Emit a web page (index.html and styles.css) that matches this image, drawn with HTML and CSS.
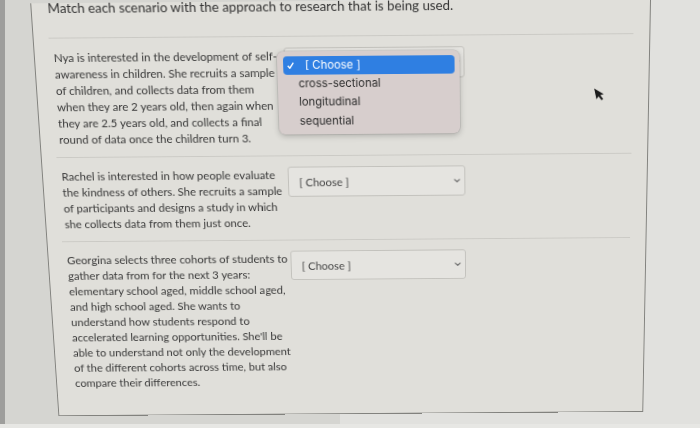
FILE: index.html
```html
<!DOCTYPE html>
<html lang="en">
<head>
<meta charset="utf-8">
<title>Matching question</title>
<link rel="stylesheet" href="styles.css">
</head>
<body>
<div class="screen">
  <section class="panel">
    <p class="title">Match each scenario with the approach to research that is being used.</p>
    <div class="rows">
      <div class="row">
        <p class="prompt">Nya is interested in the development of self-<br>awareness in children. She recruits a sample<br>of children, and collects data from them<br>when they are 2 years old, then again when<br>they are 2.5 years old, and collects a final<br>round of data once the children turn 3.</p>
        <div class="select is-open">
          <svg class="chevron" viewBox="0 0 7 4"><polyline points="0.6,0.6 3.5,3.3 6.4,0.6"/></svg>
          <ul class="menu">
            <li class="option is-selected"><svg class="check" viewBox="0 0 7 7"><polyline points="0.7,3.8 2.7,6.2 6.3,0.7"/></svg>[ Choose ]</li>
            <li class="option">cross-sectional</li>
            <li class="option">longitudinal</li>
            <li class="option">sequential</li>
          </ul>
        </div>
      </div>
      <div class="row">
        <p class="prompt">Rachel is interested in how people evaluate<br>the kindness of others. She recruits a sample<br>of participants and designs a study in which<br>she collects data from them just once.</p>
        <div class="select">
          <span class="select-value">[ Choose ]</span>
          <svg class="chevron" viewBox="0 0 7 4"><polyline points="0.6,0.6 3.5,3.3 6.4,0.6"/></svg>
        </div>
      </div>
      <div class="row">
        <p class="prompt">Georgina selects three cohorts of students to<br>gather data from for the next 3 years:<br>elementary school aged, middle school aged,<br>and high school aged. She wants to<br>understand how students respond to<br>accelerated learning opportunities. She'll be<br>able to understand not only the development<br>of the different cohorts across time, but also<br>compare their differences.</p>
        <div class="select">
          <span class="select-value">[ Choose ]</span>
          <svg class="chevron" viewBox="0 0 7 4"><polyline points="0.6,0.6 3.5,3.3 6.4,0.6"/></svg>
        </div>
      </div>
    </div>
  </section>
  <svg class="cursor" viewBox="0 0 10 15"><path d="M0.5 0.5 L0.5 12 L3.2 9.4 L5.4 14 L7.3 13.1 L5.1 8.6 L8.8 8.4 Z"/></svg>
</div>
</body>
</html>
```
FILE: styles.css
```css
html, body {
  margin: 0;
  padding: 0;
}

body {
  width: 700px;
  height: 428px;
  overflow: hidden;
  background:
    linear-gradient(to bottom, rgba(231, 231, 228, 0) 424px, #e7e7e4 424px),
    linear-gradient(to right, #9e9e9c 0 5px, #d5d5d1 5px 340px, #e1e1de 340px);
  font-family: Lato, "Open Sans", sans-serif;
  color: #383838;
}

.screen {
  position: relative;
  width: 700px;
  height: 443px;
  transform-origin: 460px 0;
  transform: perspective(1000px) rotateX(-8deg) rotate(-0.45deg);
}

.panel {
  display: flow-root;
  box-sizing: border-box;
  width: 621px;
  height: 443px;
  margin-left: 30px;
  padding: 0 16px 0 15px;
  background: #e0dfda;
  border: 1px solid #82827e;
  border-top: 0;
}

.title {
  margin: -3px 0 0 1px;
  font-size: 13.3px;
  line-height: 16px;
  color: #333333;
  white-space: nowrap;
}

.rows {
  margin-top: 22px;
}

.row {
  display: flex;
  align-items: flex-start;
  gap: 3.5px;
  padding: 11px 0 10px 4px;
  border-top: 1px solid #cbcac5;
}

.prompt {
  flex: none;
  width: 228px;
  margin: 0;
  font-size: 11.6px;
  line-height: 17px;
  white-space: nowrap;
}

.select {
  position: relative;
  flex: none;
  box-sizing: border-box;
  display: flex;
  align-items: center;
  width: 182px;
  height: 32px;
  padding-left: 11px;
  border: 1px solid #c3c2bd;
  border-radius: 3px;
  background: #e5e4e0;
  font-size: 11.5px;
  color: #454545;
}

.chevron {
  width: 7px;
  height: 4px;
  margin-left: auto;
  margin-right: 3.5px;
  fill: none;
  stroke: #6a6a6a;
  stroke-width: 1.2;
}

.menu {
  position: absolute;
  left: -7.5px;
  top: 3px;
  z-index: 2;
  box-sizing: border-box;
  width: 184px;
  height: 86px;
  margin: 0;
  padding: 5px 5px 0 6px;
  list-style: none;
  background: #d7cecd;
  border-radius: 6px;
  box-shadow: 0 2px 6px rgba(0, 0, 0, 0.22), 0 0 0 0.5px rgba(0, 0, 0, 0.15);
  font-family: Inter, "Noto Sans", sans-serif;
  font-size: 11.4px;
  line-height: 19.2px;
  color: #2b2b2b;
}

.option {
  position: relative;
  height: 19.2px;
  padding-left: 15px;
  border-radius: 4px;
  white-space: nowrap;
}

.option.is-selected {
  padding-left: 22px;
  background: #2f7fe2;
  color: #ffffff;
}

.check {
  position: absolute;
  left: 4px;
  top: 6px;
  width: 7px;
  height: 7px;
  fill: none;
  stroke: #ffffff;
  stroke-width: 1.4;
}

.cursor {
  position: absolute;
  left: 596px;
  top: 90px;
  width: 10px;
  height: 15px;
  fill: #1c1c1c;
  transform: rotate(-12deg);
}
```
